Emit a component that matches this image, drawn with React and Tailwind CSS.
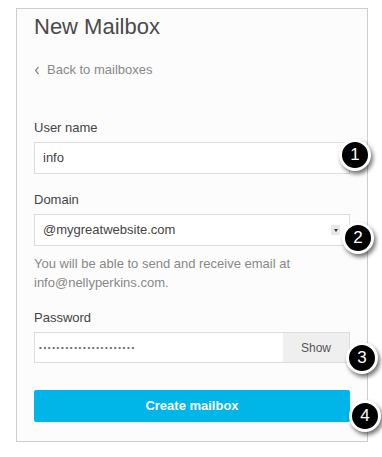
import { useState } from "react";

const Badge = ({ n, className }) => (
  <div
    className={`absolute flex h-[32px] w-[32px] items-center justify-center rounded-full border-[3px] border-white bg-black text-[17px] text-white shadow-[2px_3px_4px_rgba(0,0,0,0.55)] ${className}`}
  >
    {n}
  </div>
);

const App = () => {
  const [show, setShow] = useState(false);

  return (
    <div
      className="relative h-[457px] w-[382px] bg-white"
      style={{ fontFamily: '"Liberation Sans", Arial, sans-serif' }}
    >
      <div className="ml-4 mt-2 h-[434px] w-[352px] border border-[#cdcdcd] bg-[#fcfcfc] pl-[17px] pt-1">
        <h1 className="text-[22px] leading-[28px] text-[#4a4a4a]">New Mailbox</h1>

        <div className="mt-[19px] flex items-center gap-[7px] text-[13px] leading-[20px] text-[#888]">
          <svg width="6" height="9" viewBox="0 0 6 9" fill="none">
            <path d="M4.5 1 1.5 4.5 4.5 8" stroke="#888" strokeWidth="1.2" />
          </svg>
          <span>Back to mailboxes</span>
        </div>

        <div className="w-[316px]">
          <label className="mt-[38px] block text-[13px] leading-[20px] text-[#444]">
            User name
          </label>
          <div className="mt-1 flex h-[32px] items-center border border-[#dcdcdc] bg-white pl-2 text-[13px] text-[#444]">
            info
          </div>

          <label className="mt-4 block text-[13px] leading-[20px] text-[#444]">
            Domain
          </label>
          <div className="mt-1 flex h-[32px] items-center justify-between border border-[#dcdcdc] bg-white pl-2 pr-[9px] text-[13px] text-[#444]">
            <span>@mygreatwebsite.com</span>
            <span className="flex h-[10px] w-[9px] items-center justify-center bg-[#e8e8e8]">
              <svg width="4" height="3" viewBox="0 0 4 3">
                <path d="M0 0h4L2 3z" fill="#333" />
              </svg>
            </span>
          </div>

          <p className="mt-2 text-[13px] leading-[19px] text-[#888]">
            You will be able to send and receive email at
            <br />
            info@nellyperkins.com.
          </p>

          <label className="mt-4 block text-[13px] leading-[20px] text-[#444]">
            Password
          </label>
          <div className="mt-1 flex h-[31px] border border-[#dcdcdc] bg-white">
            <div className="flex flex-1 items-center pl-1 text-[8px] tracking-[1.6px] text-[#666]">
              {show ? "supersecretpass" : "••••••••••••••••••••••"}
            </div>
            <button
              onClick={() => setShow(!show)}
              className="w-[66px] bg-[#efefef] text-[12px] text-[#555]"
            >
              Show
            </button>
          </div>

          <button className="mt-[27px] h-[32px] w-full rounded-[2px] bg-[#00b5e7] text-[13px] font-bold text-white">
            Create mailbox
          </button>
        </div>
      </div>

      <Badge n="1" className="left-[339px] top-[131px]" />
      <Badge n="2" className="left-[342px] top-[214px]" />
      <Badge n="3" className="left-[346px] top-[334px]" />
      <Badge n="4" className="left-[349px] top-[392px]" />
    </div>
  );
};

export default App;
